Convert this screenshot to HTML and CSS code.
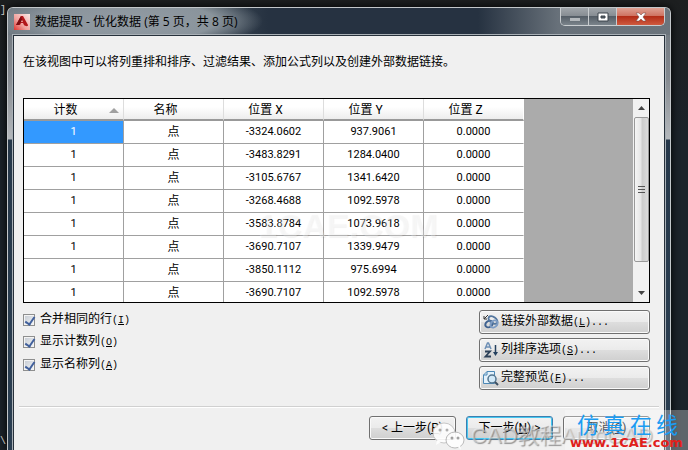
FILE: index.html
```html
<!DOCTYPE html>
<html lang="zh-CN">
<head>
    <meta charset="UTF-8">
    <meta name="viewport" content="width=device-width, initial-scale=1.0">
    <title>数据提取 - 优化数据</title>
    <link rel="stylesheet" href="styles.css">
</head>
<body>
    <span class="canvas-mark mark-top">]</span>
    <span class="canvas-mark mark-bottom">\</span>

    <div class="window">
        <header class="titlebar">
            <svg class="app-icon" width="16" height="16" viewBox="0 0 16 16">
                <defs>
                    <linearGradient id="appBg" x1="0" y1="1" x2="1" y2="0">
                        <stop offset="0" stop-color="#e0342f"/>
                        <stop offset="0.4" stop-color="#f0a09c"/>
                        <stop offset="1" stop-color="#fbe9e7"/>
                    </linearGradient>
                </defs>
                <rect width="16" height="16" fill="url(#appBg)"/>
                <path d="M7 2h2l5 9c0 2-3 1-4 0L9 9H7l-1 2H2z" fill="#b3161b"/>
                <path d="M7 2l1 4-3 5H2z" fill="#7c0d12"/>
                <path d="M8 6l1 2H7z" fill="#f3b5b0"/>
            </svg>
            <h1>数据提取 - 优化数据 (第 5 页，共 8 页)</h1>
            <div class="window-buttons">
                <button type="button" class="min" aria-label="最小化">
                    <svg width="12" height="10" viewBox="0 0 12 10"><rect x="1" y="6" width="10" height="3" fill="#b4b9bd"/></svg>
                </button>
                <button type="button" class="max" aria-label="最大化">
                    <svg width="12" height="10" viewBox="0 0 12 10"><path d="M1 1h10v8H1zM4 4v2h4V4z" fill="#fff" fill-rule="evenodd" stroke="#3d454c"/></svg>
                </button>
                <button type="button" class="close" aria-label="关闭">
                    <svg width="12" height="10" viewBox="0 0 12 10"><path d="M1 1h3l2 2 2-2h3L8 5l3 4H8L6 7 4 9H1l3-4z" fill="#fff" stroke="#6b4440" stroke-width="0.5"/></svg>
                </button>
            </div>
        </header>

        <main class="content">
            <p class="description">在该视图中可以将列重排和排序、过滤结果、添加公式列以及创建外部数据链接。</p>

            <div class="grid">
                <div class="grid-rows">
                    <table>
                        <thead>
                            <tr>
                                <th class="sorted">计数</th>
                                <th>名称</th>
                                <th>位置 X</th>
                                <th>位置 Y</th>
                                <th>位置 Z</th>
                            </tr>
                        </thead>
                        <tbody>
                            <tr><td class="selected">1</td><td class="name">点</td><td>-3324.0602</td><td>937.9061</td><td>0.0000</td></tr>
                            <tr><td>1</td><td class="name">点</td><td>-3483.8291</td><td>1284.0400</td><td>0.0000</td></tr>
                            <tr><td>1</td><td class="name">点</td><td>-3105.6767</td><td>1341.6420</td><td>0.0000</td></tr>
                            <tr><td>1</td><td class="name">点</td><td>-3268.4688</td><td>1092.5978</td><td>0.0000</td></tr>
                            <tr><td>1</td><td class="name">点</td><td>-3583.8784</td><td>1073.9618</td><td>0.0000</td></tr>
                            <tr><td>1</td><td class="name">点</td><td>-3690.7107</td><td>1339.9479</td><td>0.0000</td></tr>
                            <tr><td>1</td><td class="name">点</td><td>-3850.1112</td><td>975.6994</td><td>0.0000</td></tr>
                            <tr><td>1</td><td class="name">点</td><td>-3690.7107</td><td>1092.5978</td><td>0.0000</td></tr>
                        </tbody>
                    </table>
                </div>
                <div class="scrollbar">
                    <svg class="arrow" width="7" height="4" viewBox="0 0 7 4"><path d="M0 4l3.500-4L7 4z" fill="#444"/></svg>
                    <div class="thumb"><i></i><i></i><i></i></div>
                    <svg class="arrow" width="7" height="4" viewBox="0 0 7 4"><path d="M0 0l3.500 4L7 0z" fill="#444"/></svg>
                </div>
                <span class="grid-watermark">1CAE.COM</span>
            </div>

            <div class="options">
                <div class="checks">
                    <label><input type="checkbox" checked><span>合并相同的行<kbd>(<u>I</u>)</kbd></span></label>
                    <label><input type="checkbox" checked><span>显示计数列<kbd>(<u>O</u>)</kbd></span></label>
                    <label><input type="checkbox" checked><span>显示名称列<kbd>(<u>A</u>)</kbd></span></label>
                </div>
                <div class="actions">
                    <button type="button">
                        <svg width="16" height="16" viewBox="0 0 16 16" fill="none">
                            <path d="M5 1L1 5M1 2v3h3" stroke="#333"/>
                            <ellipse cx="6" cy="10" rx="4" ry="3" transform="rotate(-35 6 10)" stroke="#3f6290" stroke-width="2"/>
                            <ellipse cx="10" cy="6" rx="5" ry="3" transform="rotate(35 10 6)" stroke="#54779f" stroke-width="2"/>
                            <ellipse cx="11" cy="10" rx="4" ry="3" transform="rotate(-45 11 10)" stroke="#7d9cc4" stroke-width="2"/>
                        </svg>
                        <span>链接外部数据<kbd>(<u>L</u>)...</kbd></span>
                    </button>
                    <button type="button">
                        <svg width="16" height="16" viewBox="0 0 16 16" fill="none">
                            <path d="M2 7l2.500-6h1L8 7M3 5h4" stroke="#6d8fb5" stroke-width="1.500"/>
                            <path d="M2 9.500h5L2.500 14.500H8" stroke="#2c4058" stroke-width="1.800"/>
                            <path d="M12.500 3v9" stroke="#24405f" stroke-width="1.500"/>
                            <path d="M10 10h5l-2.500 4z" fill="#24405f"/>
                        </svg>
                        <span>列排序选项<kbd>(<u>S</u>)...</kbd></span>
                    </button>
                    <button type="button">
                        <svg width="16" height="16" viewBox="0 0 16 16" fill="none">
                            <path d="M4 1.500h7.500v12H0.500V5z" fill="#e3f1fb" stroke="#4c88b6"/>
                            <path d="M4 1.500V5H0.500" stroke="#4c88b6"/>
                            <circle cx="9" cy="9" r="4" fill="#d2e9f8" stroke="#54758f" stroke-width="1.500"/>
                            <path d="M12 12l3 3" stroke="#3d5063" stroke-width="2"/>
                        </svg>
                        <span>完整预览<kbd>(<u>F</u>)...</kbd></span>
                    </button>
                </div>
            </div>

            <footer class="wizard-nav">
                <button type="button">&lt; 上一步(<u>P</u>)</button>
                <button type="button" class="default">下一步(<u>N</u>) &gt;</button>
                <button type="button">取消(<u>C</u>)</button>
            </footer>
        </main>
    </div>

    <div class="account-mark">
        <svg width="33" height="28" viewBox="0 0 33 28">
            <ellipse cx="12" cy="11" rx="11" ry="10" fill="#fff" stroke="#c4c4c4"/>
            <path d="M5 18l-1 5 5-3z" fill="#fff"/>
            <ellipse cx="23" cy="18" rx="9" ry="8" fill="#fff" stroke="#b5b5b5"/>
            <path d="M26 25l3 3-1-5z" fill="#fff"/>
            <circle cx="8" cy="8" r="1.500" fill="#aaa"/><circle cx="15" cy="8" r="1.500" fill="#aaa"/>
            <circle cx="20" cy="16" r="1.500" fill="#999"/><circle cx="26" cy="16" r="1.500" fill="#999"/>
        </svg>
        <span>CAD教程AutoCAD</span>
    </div>

    <div class="site-mark">
        <div class="site-name"><span>仿</span><span>真</span><span>在</span><span>线</span></div>
        <div class="site-url">www.1CAE.com</div>
    </div>
</body>
</html>
```
FILE: styles.css
```css
* {
    box-sizing: border-box;
}

body {
    position: relative;
    display: flex;
    min-height: 100vh;
    margin: 0;
    padding: 7px 17px 0 7px;
    overflow: hidden;
    background: linear-gradient(#1d1f20, #1b232a 30%);
    color: #000;
    font: 12px/16px Roboto, "Noto Sans CJK SC", sans-serif;
}

h1,
p {
    margin: 0;
    font-size: 12px;
    font-weight: normal;
}

button {
    font: inherit;
    color: inherit;
}

.canvas-mark {
    position: absolute;
    left: 0;
    color: #c8c8c8;
    font: 10px/12px "Liberation Mono", monospace;
}

.mark-top {
    top: 5px;
}

.mark-bottom {
    bottom: 2px;
}

/* Window frame */
.window {
    flex: 1;
    display: flex;
    flex-direction: column;
    padding: 0 5px;
    border: 1px solid #c3c7ca;
    border-bottom: 0;
    border-radius: 6px 6px 0 0;
    background: linear-gradient(#6a737b 0, #858a90 70px, #b4b8bc 131px, #26384a 132px, #2b3f52 100%);
    box-shadow: 0 0 8px #000;
}

.titlebar {
    display: flex;
    align-items: center;
    height: 27px;
    margin: 0 -5px;
    padding: 0 5px;
    border-radius: 5px 5px 0 0;
    background:
        radial-gradient(ellipse 135px 30px at 120px 13px, #929ba3 0, #8a949c 65%, transparent 100%),
        linear-gradient(90deg, #6f7981 0, #3a4652 210px, #263241 260px, #263241 470px, #68717a 550px, #6b747c 100%);
}

.app-icon {
    margin-left: 1px;
}

.titlebar h1 {
    flex: 1;
    margin-left: 5px;
    font-family: "Open Sans", "Noto Sans CJK SC", sans-serif;
    white-space: nowrap;
}

.window-buttons {
    display: flex;
    align-self: flex-start;
    border: 1px solid #c9cdd0;
    border-top: 0;
    border-radius: 0 0 5px 5px;
    overflow: hidden;
}

.window-buttons button {
    display: flex;
    align-items: center;
    justify-content: center;
    width: 28px;
    height: 17px;
    padding: 0;
    border: 0;
    border-right: 1px solid #c9cdd0;
    background: linear-gradient(#a0a5aa, #878d93 45%, #555e67 50%, #7b848b);
}

.window-buttons .close {
    width: 47px;
    border-right: 0;
    background: linear-gradient(#dfa193, #cf7462 45%, #b32d17 50%, #cf5a3f);
}

.content {
    flex: 1;
    display: flex;
    flex-direction: column;
    border: 1px solid #27313b;
    border-bottom: 0;
    outline: 1px solid #a9b0b6;
    background: #f0f0f0;
}

.description {
    padding: 18px 9px 0;
}

/* Data grid */
.grid {
    position: relative;
    display: flex;
    height: 205px;
    margin: 28px 14px 0 9px;
    border: 1px solid #000;
    background: #ababab;
}

.grid-rows {
    flex: 1;
    overflow: hidden;
}

table {
    width: 500px;
    border-collapse: separate;
    border-spacing: 0;
    table-layout: fixed;
    background: #fff;
}

th {
    position: relative;
    height: 22px;
    padding: 2px 16px 0 0;
    border-right: 1px solid #ddd;
    border-bottom: 2px solid #999;
    background: linear-gradient(#fff 40%, #ededed);
    font-weight: normal;
}

th.sorted::after {
    content: "";
    position: absolute;
    top: 9px;
    right: 4px;
    border: 5px solid transparent;
    border-top: 0;
    border-bottom-color: #a0a0a0;
}

td {
    height: 23px;
    padding: 0;
    border-right: 1px solid #a0a0a0;
    border-bottom: 1px solid #a0a0a0;
    font-size: 11px;
    text-align: center;
}

th:last-child,
td:last-child {
    border-right-color: #fff;
}

td.name {
    font-size: 12px;
}

td.selected {
    background: #3399ff;
    color: #fff;
}

.scrollbar {
    display: flex;
    flex-direction: column;
    align-items: center;
    width: 16px;
    background: #f1f1f1;
}

.arrow {
    margin: 7px 0;
}

.thumb {
    flex: 1;
    display: flex;
    flex-direction: column;
    align-items: center;
    justify-content: center;
    gap: 2px;
    width: 15px;
    margin-bottom: 22px;
    border: 1px solid #999;
    border-radius: 2px;
    background: linear-gradient(90deg, #f5f5f5, #e6e6e6 45%, #ccc 55%, #dcdcdc);
}

.thumb i {
    width: 7px;
    height: 1px;
    background: #555;
}

.grid-watermark {
    position: absolute;
    top: 108px;
    left: 234px;
    color: rgba(255, 255, 255, 0.3);
    font: bold 34px/36px "Liberation Sans", sans-serif;
    text-shadow: 1px 1px 1px rgba(0, 0, 0, 0.05);
}

/* Options under the grid */
.options {
    display: flex;
    justify-content: space-between;
    padding: 7px 14px 0 9px;
}

kbd {
    font: 10px/16px "Liberation Mono", monospace;
}

.checks label {
    display: flex;
    align-items: center;
    gap: 5px;
    height: 23px;
}

.checks label:first-child {
    height: 20px;
}

.checks input {
    appearance: none;
    width: 12px;
    height: 12px;
    margin: 0;
    border: 1px solid #8e8f8f;
    background: linear-gradient(135deg, #c4cad2, #f3f5f7);
    box-shadow: inset 0 0 0 1px #f4f4f4;
}

.checks input:checked::before {
    content: "";
    display: block;
    width: 4px;
    height: 8px;
    margin: 0 0 0 3px;
    border: solid #41609c;
    border-width: 0 2px 2px 0;
    transform: rotate(35deg);
}

.actions {
    display: flex;
    flex-direction: column;
    gap: 4px;
    width: 171px;
}

.actions button,
.wizard-nav button {
    height: 24px;
    padding: 0 3px;
    border: 1px solid #707070;
    border-radius: 3px;
    background: linear-gradient(#f2f2f2, #ebebeb 48%, #dddddd 52%, #cfcfcf);
    box-shadow: inset 0 0 0 1px #fafafa;
    white-space: nowrap;
}

.actions button {
    display: flex;
    align-items: center;
    gap: 2px;
}

/* Wizard buttons */
.wizard-nav {
    display: flex;
    justify-content: flex-end;
    gap: 10px;
    margin: 16px 5px 0;
    padding: 9px 9px 10px;
    border-top: 1px solid #d0d0d0;
    box-shadow: inset 0 1px #fff;
}

.wizard-nav button {
    width: 87px;
}

.wizard-nav .default {
    border-color: #3c7fb1;
    box-shadow: inset 0 0 0 1px #46c8f0;
}

/* Watermarks over the window */
.account-mark {
    position: absolute;
    right: 35px;
    bottom: 0;
    display: flex;
    align-items: center;
    gap: 6px;
    color: rgba(255, 255, 255, 0.4);
    font: 22px/28px "Liberation Sans", "Noto Sans CJK SC", sans-serif;
    text-shadow: 1px 1px 1px rgba(110, 110, 110, 0.7);
    white-space: nowrap;
}

.account-mark svg {
    opacity: 0.9;
}

.site-mark {
    position: absolute;
    right: 0;
    bottom: 0;
    width: 123px;
    height: 40px;
    background: rgba(255, 255, 255, 0.3);
}

.site-name {
    display: flex;
    justify-content: space-between;
    padding: 2px 10px 0 12px;
    color: #1c9cf2;
    font: 22px/22px "Noto Sans CJK SC", sans-serif;
}

.site-url {
    color: #e0201b;
    font: bold 13px/18px "DejaVu Sans", sans-serif;
    text-align: center;
}
```
